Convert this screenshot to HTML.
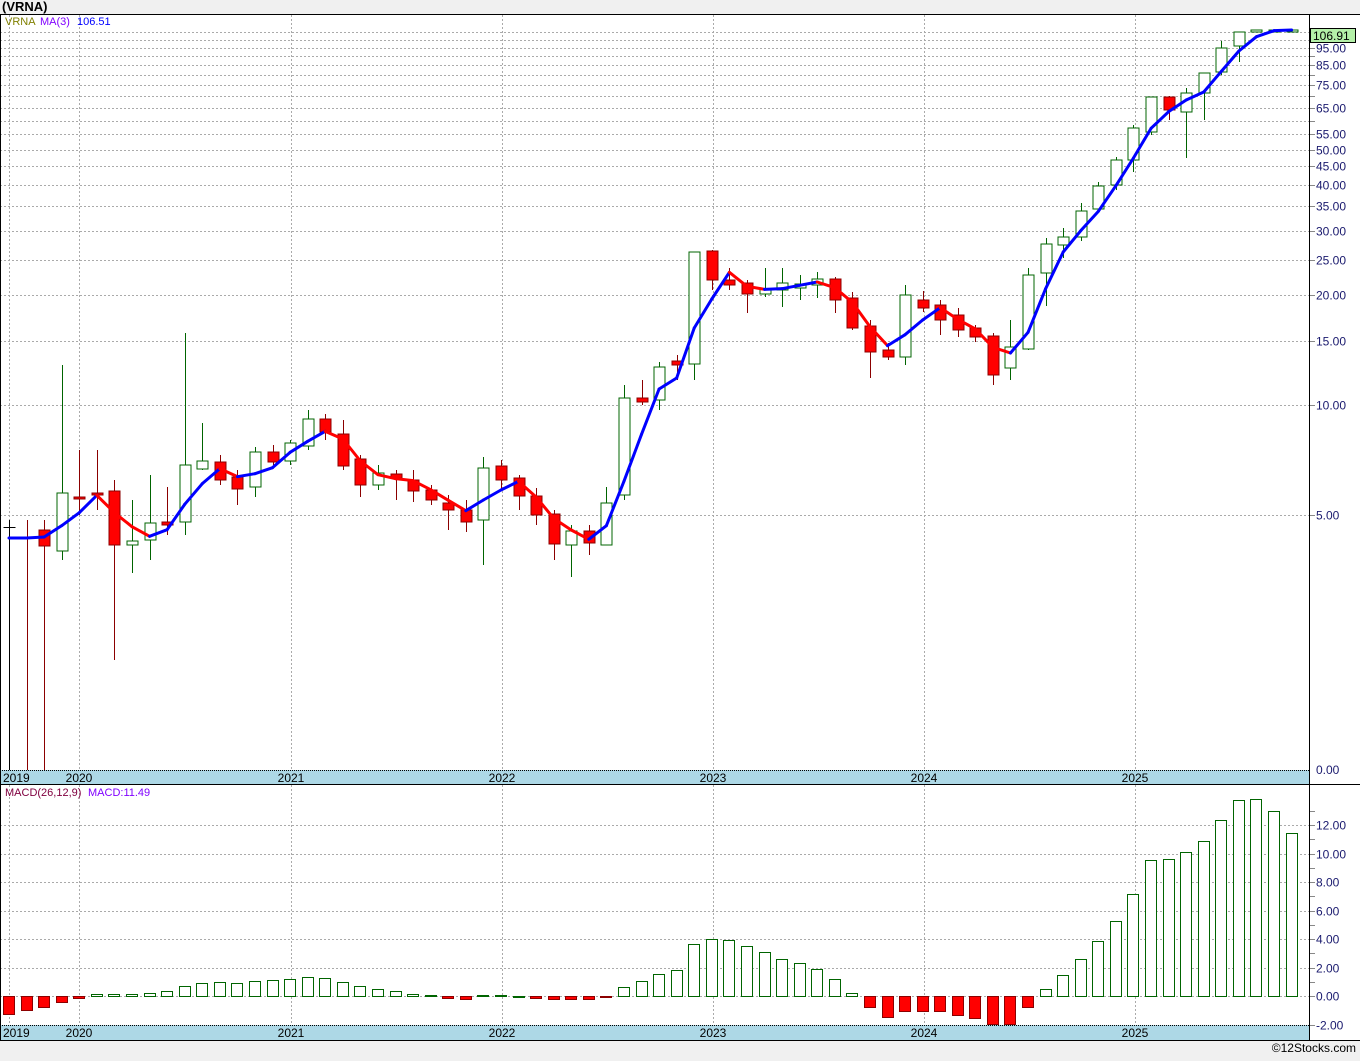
<!DOCTYPE html><html><head><meta charset="utf-8"><style>
body{margin:0;width:1360px;height:1056px;background:#f0f0f0;overflow:hidden;font-family:"Liberation Sans",sans-serif}
svg text{font-family:"Liberation Sans",sans-serif;font-size:12px}
svg text.s{font-size:11px}
</style></head><body>
<svg id="s" width="1360" height="1056" xmlns="http://www.w3.org/2000/svg">
<rect x="0" y="14" width="1360" height="1026" fill="#fff"/>
<text x="2" y="11" font-weight="bold" style="font-size:13px">(VRNA)</text>
<g id="g"></g>
</svg>
<script>
var g=document.getElementById('g'),h='';
function L(x1,y1,x2,y2,c,w,d){h+='<line x1="'+x1+'" y1="'+y1+'" x2="'+x2+'" y2="'+y2+'" stroke="'+c+'" stroke-width="'+(w||1)+'"'+(d?' stroke-dasharray="'+d+'"':'')+'/>';}
function T(x,y,t,c,a,cls){h+='<text x="'+x+'" y="'+y+'" fill="'+(c||'#000')+'"'+(a?' text-anchor="'+a+'"':'')+(cls?' class="'+cls+'"':'')+'>'+t+'</text>';}
var py=function(p){return 515-110*Math.log2(p/5)};
[105,95,85,75,65,55,50,45,40,35,30,25,20,15,10,5].forEach(function(p){var y=Math.round(py(p))+.5;L(0,y,1309,y,'#aaa',1,'2,2');L(1309,y,1315,y,'#888');if(p!=105)T(1316,y+4,p.toFixed(2),'#1a1a6e');});
[100,90,80,70,60].forEach(function(p){var y=Math.round(py(p))+.5;L(0,y,1309,y,'#aaa',1,'2,2');L(1309,y,1315,y,'#888')});
T(1316,774,'0.00','#1a1a6e');
for(var v=-2;v<=12;v+=2){var y=Math.round(996-14.25*v)+.5;L(0,y,1309,y,'#aaa',1,'2,2');L(1309,y,1315,y,'#888');T(1316,y+4,v.toFixed(2),'#1a1a6e');}
[1,3,5,7,9,11,13].forEach(function(v){var y=Math.round(996-14.25*v)+.5;L(1309,y,1315,y,'#888')});
var yrs=[[9,'2019'],[79,'2020'],[291,'2021'],[502,'2022'],[713,'2023'],[924,'2024'],[1135,'2025']];
yrs.forEach(function(a){L(a[0]+.5,15,a[0]+.5,770,'#aaa',1,'2,2');L(a[0]+.5,785,a[0]+.5,1025,'#aaa',1,'2,2');});
h+='<rect x="0" y="770" width="1309" height="14" fill="#add8e6"/><rect x="0" y="1025" width="1309" height="15" fill="#add8e6"/>';
L(0,770.5,1309,770.5,'#000',1,'1,1');L(0,1025.5,1309,1025.5,'#000',1,'1,1');
yrs.forEach(function(a,i){if(i==0){T(3,782,a[1]);T(3,1037,a[1]);}else{T(a[0],782,a[1],'#000','middle');T(a[0],1037,a[1],'#000','middle');}});
var C=[[527,527,520,770],[538,538,520,770],[530,546,520,770],[551,493,365,560],[497,499,450,515],[493,494,450,510],[491,545,480,660],[545,541,500,573],[540,523,475,560],[522,525,487,535],[522,465,333,535],[469,461,423,470],[462,480,455,485],[477,489,470,505],[487,452,447,497],[452,462,445,465],[461,443,440,465],[446,419,410,450],[419,432,414,440],[434,466,420,470],[459,485,455,497],[485,473,465,490],[474,478,470,500],[480,491,470,502],[490,500,485,505],[503,510,495,530],[510,522,500,532],[520,468,457,565],[466,480,460,490],[478,496,475,510],[496,515,488,525],[514,544,510,560],[545,531,525,577],[531,543,525,555],[545,503,487,545],[495,398,385,500],[398,402,380,405],[400,367,362,410],[361,365,355,380],[364,252,252,380],[251,280,250,290],[280,285,268,290],[283,294,280,313],[294,289,268,297],[290,283,268,307],[288,284,275,300],[285,279,272,298],[279,300,277,313],[298,328,292,330],[326,352,320,378],[350,357,343,360],[357,295,285,365],[300,308,291,312],[305,320,300,335],[315,330,308,337],[328,337,325,342],[336,375,333,385],[368,347,320,380],[349,275,268,350],[273,244,238,306],[245,237,228,258],[237,211,203,241],[209,186,182,212],[185,160,157,190],[160,128,125,172],[132,97,97,135],[97,110,96,120],[112,93,88,158],[93,73,73,120],[72,48,41,75],[46,32,32,62],[32,30,30,32],[31,30,30,31],[30,30,30,30]];
function X(i){return 9+i*17.57}
C.forEach(function(c,i){var x=Math.round(X(i))+.5;
 if(i==0){L(x,520,x,770,'#000');L(x-6,527.5,x+6,527.5,'#000');return;}
 var up=c[1]<=c[0];var col=up?'#006400':'#8b0000';
 if(i<3){L(x,c[2],x,c[3],'#8b0000');}else L(x,c[2],x,c[3],col);
 var t=Math.min(c[0],c[1]),b=Math.max(c[0],c[1]);if(b-t<2)b=t+2;
 if(i==1){return;}
 h+='<rect x="'+(x-5.5)+'" y="'+t+'" width="11" height="'+(b-t)+'" fill="'+(up?'#fff':'#f00')+'" stroke="'+(up?'#006400':'#8b0000')+'"/>';});
var cl=C.map(function(c){return c[1]}),ma=[];
for(var i=2;i<cl.length;i++)ma[i]=(cl[i]+cl[i-1]+cl[i-2])/3;
ma[1]=538;ma[0]=538;
for(var i=1;i<ma.length;i++){var col=ma[i]>ma[i-1]?'#f00':'#00f';h+='<line x1="'+X(i-1)+'" y1="'+ma[i-1]+'" x2="'+X(i)+'" y2="'+ma[i]+'" stroke="'+col+'" stroke-width="3" stroke-linecap="round"/>';}
var M=[1014,1010,1007,1002,998,994,994,994,993,991,986,983,982,983,981,980,979,977,978,982,986,989,991,994,995,998,999,995,995,996,998,999,999,999,997,987,981,974,970,944,939,940,946,952,959,963,969,979,993,1007,1017,1011,1011,1011,1015,1018,1024,1024,1007,989,975,959,941,921,894,860,859,852,841,820,800,799,811,833];
M.forEach(function(y,i){var x=Math.round(X(i));
 var t=Math.min(y,996),b=Math.max(y,996);if(b-t<1)b=t+1;
 var neg=y>996;
 h+='<rect x="'+(x-5.5)+'" y="'+(t+.5)+'" width="11" height="'+(b-t)+'" fill="'+(neg?'#f00':'#fff')+'" stroke="'+(neg?'#8b0000':'#006400')+'"/>';});
L(0,14.5,1360,14.5,'#000');L(0,784.5,1360,784.5,'#000');L(1309.5,14,1309.5,1040,'#000');L(0,1040.5,1360,1040.5,'#000');L(0.5,14,0.5,1040,'#000');
h+='<rect x="1310.5" y="28.5" width="45" height="14" fill="#b4f0a8" stroke="#000"/>';T(1313,40,'106.91','#000');
T(5,25,'VRNA','#808000','','s');T(40,25,'MA(3)','#8000ff','','s');T(77,25,'106.51','#0000ff','','s');
T(5,796,'MACD(26,12,9)','#800040','','s');T(88,796,'MACD:11.49','#8000ff','','s');
T(1356,1052,'©12Stocks.com','#000','end');
g.innerHTML=h;
</script>
</body></html>
